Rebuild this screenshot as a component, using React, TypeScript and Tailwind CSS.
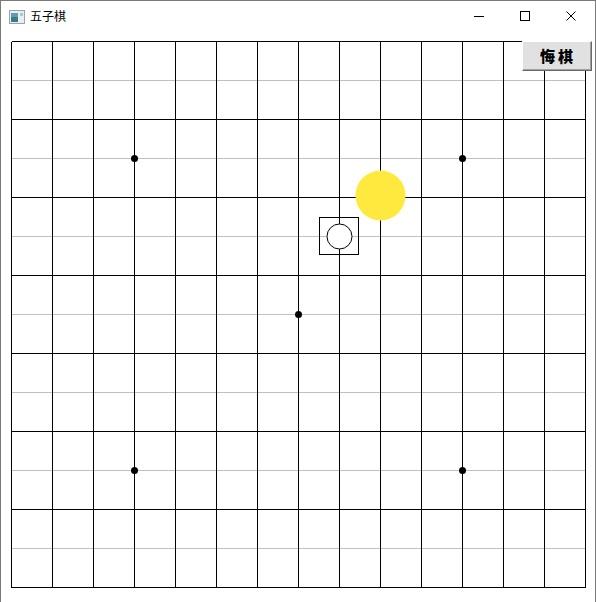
import React from 'react';

const COLS = 14;
const ROWS = 14;
const CW = 41;
const RH = 39;
const OX = 11;
const OY = 41;

const stars: [number, number][] = [
  [3, 3],
  [11, 3],
  [7, 7],
  [3, 11],
  [11, 11],
];

// Board drawing
const Board: React.FC = () => {
  const px = (c: number) => OX + c * CW + 0.5;
  const py = (r: number) => OY + r * RH + 0.5;
  return (
    <svg width="596" height="602" className="block" shapeRendering="crispEdges">
      {Array.from({ length: ROWS + 1 }).map((_, r) => (
        <line
          key={'h' + r}
          x1={px(0)}
          x2={px(COLS)}
          y1={py(r)}
          y2={py(r)}
          stroke={r % 2 === 0 ? '#000' : '#c0c0c0'}
          strokeWidth="1"
        />
      ))}
      {Array.from({ length: COLS + 1 }).map((_, c) => (
        <line key={'v' + c} x1={px(c)} x2={px(c)} y1={py(0)} y2={py(ROWS)} stroke="#000" strokeWidth="1" />
      ))}
      {stars.map(([c, r]) => (
        <circle key={c + '-' + r} cx={px(c)} cy={py(r)} r="3.5" fill="#000" shapeRendering="auto" />
      ))}
      {/* cursor piece */}
      <rect x={319.5} y={217.5} width={39} height={37} fill="none" stroke="#000" />
      <circle cx={px(8)} cy={py(5)} r="12.5" fill="#fff" stroke="#000" shapeRendering="auto" />
      {/* yellow piece */}
      <circle cx={380.5} cy={195.5} r="25" fill="#ffe93f" shapeRendering="auto" />
    </svg>
  );
};

const App: React.FC = () => {
  return (
    <div className="w-[596px] h-[602px] bg-white border-l border-t border-r border-[#7a7a7a] relative overflow-hidden font-['Microsoft_YaHei','Noto_Sans_CJK_SC',sans-serif]">
      {/* Title bar */}
      <div className="h-[30px] flex items-center relative z-10">
        <svg width="16" height="14" className="ml-[8px] mt-[1px]" viewBox="0 0 16 14">
          <rect x="0.5" y="0.5" width="15" height="13" fill="#e8eef2" stroke="#9aa3aa" />
          <rect x="2" y="3" width="7" height="9" fill="#3b7a8a" />
          <rect x="2" y="3" width="7" height="4" fill="#5d9fb0" />
          <rect x="11" y="3" width="3" height="3" fill="#b8c4cc" />
        </svg>
        <span className="ml-[5px] text-[12px] leading-none text-black">五子棋</span>
        <div className="ml-auto flex items-center h-full">
          <div className="w-[46px] h-full flex items-center justify-center">
            <div className="w-[10px] h-px bg-black" />
          </div>
          <div className="w-[46px] h-full flex items-center justify-center">
            <div className="w-[10px] h-[10px] border border-black" />
          </div>
          <div className="w-[46px] h-full flex items-center justify-center mr-[1px]">
            <svg width="10" height="10" viewBox="0 0 10 10">
              <path d="M0.5 0.5 L9.5 9.5 M9.5 0.5 L0.5 9.5" stroke="#000" strokeWidth="1" />
            </svg>
          </div>
        </div>
      </div>

      {/* Board canvas */}
      <div className="absolute left-[-1px] top-[-1px]">
        <Board />
      </div>

      {/* Undo button */}
      <button className="absolute left-[521px] top-[40px] w-[70px] h-[30px] bg-[#e1e1e1] border-t border-l border-t-white border-l-white border-r border-b border-r-[#696969] border-b-[#696969] shadow-[inset_-1px_-1px_0_#a0a0a0] flex items-center justify-center pl-[2px] text-[15px] tracking-[3px] font-black text-black font-['Noto_Sans_CJK_SC',sans-serif]">
        悔棋
      </button>
    </div>
  );
};

export default App;
